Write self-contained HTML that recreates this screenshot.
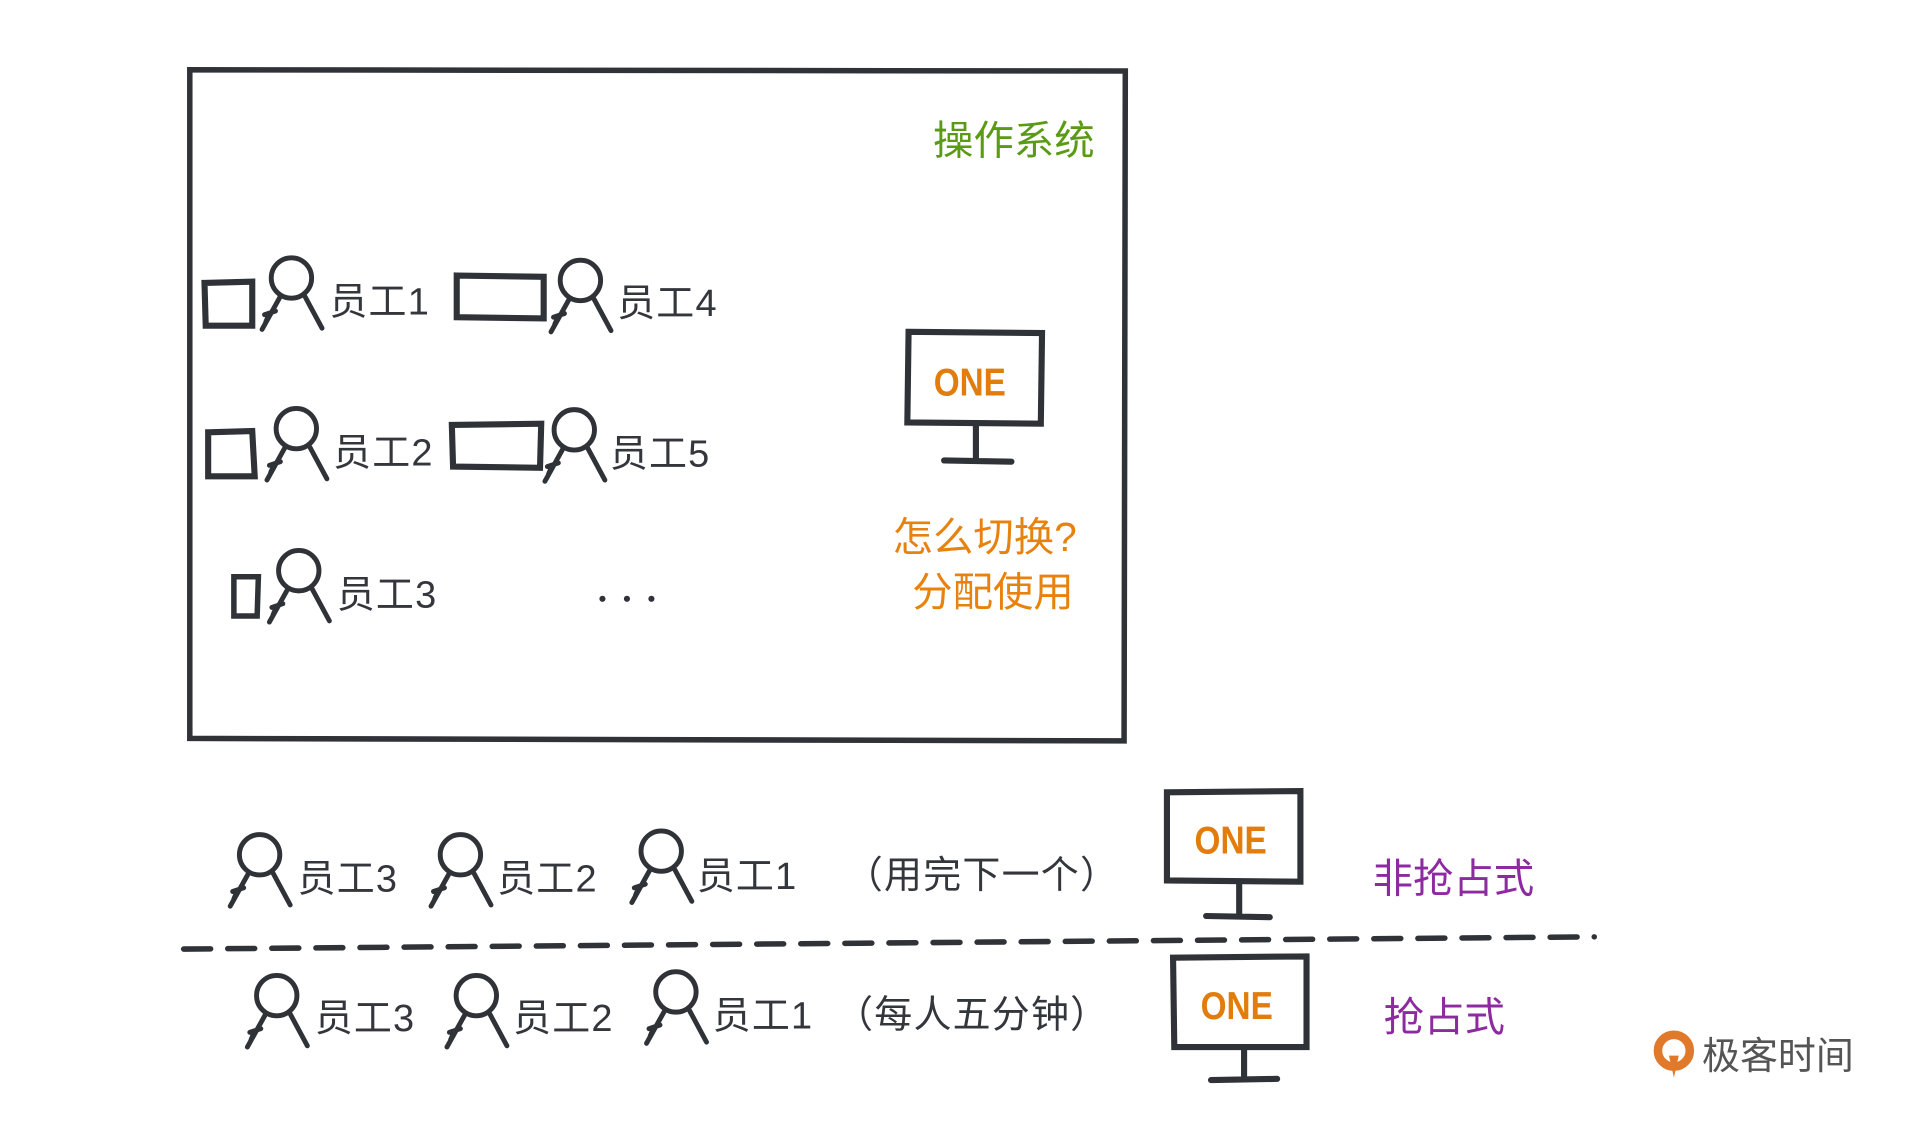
<!DOCTYPE html>
<html><head><meta charset="utf-8"><style>
html,body{margin:0;padding:0;background:#fff;width:1920px;height:1145px;overflow:hidden}
svg{display:block}
text{font-family:"Liberation Sans","Noto Sans CJK SC",sans-serif}
</style></head><body>
<svg width="1920" height="1145" viewBox="0 0 1568 935" preserveAspectRatio="none" xmlns="http://www.w3.org/2000/svg">
<defs>
<g id="p" fill="none" stroke="#2f3338" stroke-width="4" stroke-linecap="round">
  <circle cx="0" cy="0" r="16.5"/>
  <path d="M-9 15 L-24 42 M11 15 L25 41 M-13 27 L-22 30 M-18 29 L-21 36"/>
</g>
</defs>
<g fill="none" stroke="#2f3338" stroke-linecap="round">
<path d="M155 57 L919 58 L918 605 L155 603 Z" stroke-width="4.5"/>
<path d="M167 231 L206 230 L206 266 L168 266 Z" stroke-width="5"/>
<path d="M373 225 L444 226 L444 260 L373 259 Z" stroke-width="5"/>
<path d="M170 353 L206 352 L208 389 L170 389 Z" stroke-width="5"/>
<path d="M369 347 L442 346 L441 382 L370 381 Z" stroke-width="5"/>
<path d="M191 471 L211 471 L210 503 L191 503 Z" stroke-width="4.5"/>
<path d="M742 271 L851 272 L850 346 L741 345 Z" stroke-width="5"/>
<path d="M797 347 L797 375 M771 376 L826 377" stroke-width="5"/>
<path d="M953 647 L1062 646 L1062 720 L953 719 Z" stroke-width="5"/>
<path d="M1012 721 L1012 747 M985 748 L1037 749" stroke-width="5"/>
<path d="M958 782 L1067 781 L1067 855 L959 855 Z" stroke-width="5"/>
<path d="M1016 856 L1016 881 M989 882 L1043 881" stroke-width="5"/>
<path d="M150 775 L1302 765" stroke-width="4.5" stroke-dasharray="22 14"/>
</g>
<use href="#p" x="238" y="227"/>
<use href="#p" x="474" y="229"/>
<use href="#p" x="242" y="350"/>
<use href="#p" x="469" y="351"/>
<use href="#p" x="244" y="466"/>
<use href="#p" x="212" y="698"/>
<use href="#p" x="376" y="698"/>
<use href="#p" x="540" y="695"/>
<use href="#p" x="226" y="813"/>
<use href="#p" x="389" y="813"/>
<use href="#p" x="552" y="810"/>
<g fill="#2f3338">
<circle cx="492" cy="489" r="2.5"/><circle cx="512" cy="489" r="2.5"/><circle cx="532" cy="489" r="2.5"/>
</g>
<g fill="#33373c" font-size="31" letter-spacing="1">
<text x="269" y="257">员工1</text>
<text x="504" y="258">员工4</text>
<text x="272" y="380">员工2</text>
<text x="498" y="381">员工5</text>
<text x="275" y="496">员工3</text>
<text x="243" y="728">员工3</text>
<text x="406" y="728">员工2</text>
<text x="569" y="726">员工1</text>
<text x="690" y="725">（用完下一个）</text>
<text x="257" y="842">员工3</text>
<text x="419" y="842">员工2</text>
<text x="582" y="840">员工1</text>
<text x="682" y="839">（每人五分钟）</text>
</g>
<text x="762" y="126" font-size="33" fill="#5a9a14">操作系统</text>
<g fill="#e27c0c" font-weight="bold" font-size="32" text-anchor="middle">
<text x="0" y="0" transform="translate(792 323) scale(0.85 1)">ONE</text>
<text x="0" y="0" transform="translate(1005 697) scale(0.85 1)">ONE</text>
<text x="0" y="0" transform="translate(1010 832) scale(0.85 1)">ONE</text>
</g>
<g fill="#e8820e" font-size="33">
<text x="729" y="450">怎么切换?</text>
<text x="745" y="495">分配使用</text>
</g>
<g fill="#8e2aa0" font-size="33">
<text x="1121" y="729">非抢占式</text>
<text x="1130" y="842">抢占式</text>
</g>
<circle cx="1367" cy="858" r="13" fill="none" stroke="#e07a2a" stroke-width="7"/>
<path d="M1363 862 L1367 880 L1371 862 Z" fill="#e07a2a"/>
<text x="1390" y="873" font-size="31" fill="#555">极客时间</text>
</svg>
</body></html>
